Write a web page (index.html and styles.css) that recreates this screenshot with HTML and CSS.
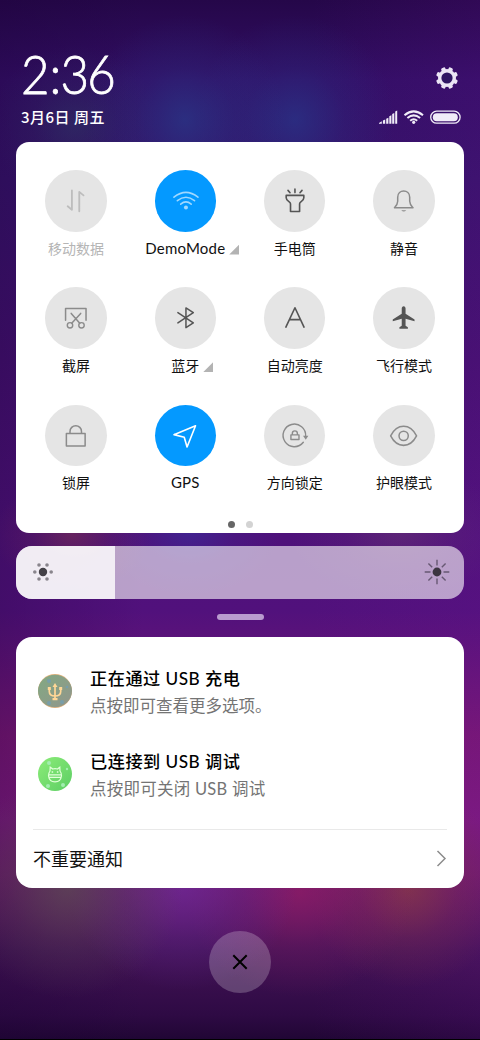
FILE: index.html
```html
<!DOCTYPE html>
<html lang="zh-CN">
<head>
<meta charset="utf-8">
<title>控制中心</title>
<link rel="stylesheet" href="styles.css">
</head>
<body>
<main class="screen">
  <header class="header">
    <div>
      <div class="clock">2<span class="colon">:</span>36</div>
      <div class="date">3月6日 周五</div>
    </div>
    <div class="status">
      <svg class="gear" viewBox="0 0 24 24"><g fill="#ebe5f5"><rect x="9.8" y="1" width="4.4" height="22" rx="1.3" transform="rotate(22.5 12 12)"/><rect x="9.8" y="1" width="4.4" height="22" rx="1.3" transform="rotate(67.5 12 12)"/><rect x="9.8" y="1" width="4.4" height="22" rx="1.3" transform="rotate(112.5 12 12)"/><rect x="9.8" y="1" width="4.4" height="22" rx="1.3" transform="rotate(157.5 12 12)"/><circle cx="12" cy="12" r="9"/></g><circle cx="12" cy="12" r="5.6" fill="#2f1663"/></svg>
      <svg class="indicators" viewBox="0 0 82 14">
        <path fill="#f0ecf8" d="M0 13L2.8 11.3V13.8H0zM3.9 10.6L6.2 9.6V13.8H3.9zM7.2 8.8L9.4 7.7V13.8H7.2zM10.3 6.3L12.4 5.2V13.8H10.3zM13.2 4L15.3 3V13.8H13.2zM16.2 1.6L18.2 .6V13.8H16.2z"/>
        <g fill="none" stroke="#f0ecf8" stroke-width="2"><path d="M25.5 5.2Q34.7-2.5 44 5.2M28.4 8Q34.7 2.8 41.1 8M31.2 10.7Q34.7 7.8 38.2 10.7"/></g><circle cx="34.7" cy="12.3" r="1.6" fill="#f0ecf8"/>
        <rect x="51.7" y="1.2" width="29.4" height="12" rx="6" fill="none" stroke="#f0ecf8" stroke-width="1.3"/><rect x="53.8" y="3.2" width="25" height="8" rx="4" fill="#f0ecf8"/>
      </svg>
    </div>
  </header>

  <section class="panel">
    <div class="tiles">
      <div class="tile muted"><div class="disc"><svg viewBox="0 0 61 61"><path d="M26.7 20.3V39.4L22.5 36M34 41V21.7L38.2 25.2" stroke="#bdbdbd" stroke-width="1.8"/></svg></div><div class="label">移动数据</div></div>
      <div class="tile on"><div class="disc"><svg viewBox="0 0 61 61"><path d="M18.8 27Q30.7 17.5 42.6 27M22.2 30.4Q30.7 23.7 39.2 30.4M25.5 33.9Q30.7 29.5 35.9 33.9" stroke="#a0d8ff" stroke-width="1.6"/><circle cx="30.7" cy="37.2" r="2" fill="#a0d8ff"/></svg></div><div class="label latin">DemoMode<i class="corner"></i></div></div>
      <div class="tile"><div class="disc"><svg viewBox="0 0 61 61"><path d="M22 25.2H39.5V27.5C39.5 31 35.3 31 35.3 33.5V41.2H26.3V33.5C26.3 31 22 31 22 27.5ZM30.7 19V22.4M23.8 20.2L25.8 22.5M37.7 20.2L35.7 22.5" stroke="#555" stroke-width="1.6"/></svg></div><div class="label">手电筒</div></div>
      <div class="tile"><div class="disc"><svg viewBox="0 0 61 61"><path d="M21.3 37.4H39.7C38 35.6 36.6 34.5 36.4 31V27C36.4 18.7 24.5 18.7 24.5 27V31C24.3 34.5 23 35.6 21.3 37.4Z" stroke="#8b8b8b" stroke-width="1.5"/><path d="M28 39.8H33Q30.5 42.5 28 39.8" fill="#8b8b8b"/></svg></div><div class="label">静音</div></div>
      <div class="tile"><div class="disc"><svg viewBox="0 0 61 61"><path d="M20.4 33V21.4H40.7V33M26 26.2L34.5 36M35.4 26.2L26.5 36" stroke="#8b8b8b" stroke-width="1.5"/><circle cx="24.8" cy="38" r="2.7" stroke="#8b8b8b" stroke-width="1.4"/><circle cx="36.2" cy="38" r="2.7" stroke="#8b8b8b" stroke-width="1.4"/></svg></div><div class="label">截屏</div></div>
      <div class="tile"><div class="disc"><svg viewBox="0 0 61 61"><path d="M22.7 25.4L38 35.6L30.7 40.3V20.8L38 25.4L22.7 35.6" stroke="#555" stroke-width="1.5"/></svg></div><div class="label">蓝牙<i class="corner"></i></div></div>
      <div class="tile"><div class="disc"><svg viewBox="0 0 61 61"><path d="M21.7 39.8L30.7 20.6L39.7 39.8M25.2 32.4H36.2" stroke="#555" stroke-width="1.6"/></svg></div><div class="label">自动亮度</div></div>
      <div class="tile"><div class="disc"><svg viewBox="0 0 61 61"><path fill="#555" d="M30.4 19C31.6 19 32.3 20 32.3 21.3V26.6L41.2 32.2V34L32.3 31.5V38.5L34.6 40V41.3H26.2V40L28.5 38.5V31.5L19.6 34V32.2L28.5 26.6V21.3C28.5 20 29.2 19 30.4 19Z"/></svg></div><div class="label">飞行模式</div></div>
      <div class="tile"><div class="disc"><svg viewBox="0 0 61 61"><path d="M21.2 28.2H39.8V40.6H21.2ZM24.8 28V26.2A5.7 5.7 0 0 1 36.2 26.2V28" stroke="#8b8b8b" stroke-width="1.5"/></svg></div><div class="label">锁屏</div></div>
      <div class="tile on"><div class="disc"><svg viewBox="0 0 61 61"><path d="M40.2 20.6L18.8 29.4L29 32L31.8 41.7Z" stroke="#fff" stroke-width="1.6"/></svg></div><div class="label latin">GPS</div></div>
      <div class="tile"><div class="disc"><svg viewBox="0 0 61 61"><path d="M39 37A11.2 11.2 0 1 1 41.3 31M26.7 29.6H34.7V34.2H26.7ZM28.1 29.4V28.2A2.5 2.5 0 0 1 33.1 28.2V29.4" stroke="#8b8b8b" stroke-width="1.4"/><path d="M38.7 30.4H44L41.4 34.4Z" fill="#8b8b8b"/></svg></div><div class="label">方向锁定</div></div>
      <div class="tile"><div class="disc"><svg viewBox="0 0 61 61"><path d="M17.5 30.6C24 18 36.7 18 43.2 30.6C36.7 43.2 24 43.2 17.5 30.6Z" stroke="#8b8b8b" stroke-width="1.5"/><circle cx="30.4" cy="30.6" r="4.6" stroke="#8b8b8b" stroke-width="1.5"/></svg></div><div class="label">护眼模式</div></div>
    </div>
    <div class="pages"><i></i><i></i></div>
  </section>

  <section class="slider">
    <div class="slider-fill"><svg width="22" height="22" viewBox="-11 -11 22 22"><circle r="4.2" fill="#444147"/><g fill="#89858c"><circle cx="-8.2" r="1.8"/><circle cx="8.2" r="1.8"/><circle cx="-4" cy="-7" r="1.8"/><circle cx="4" cy="-7" r="1.8"/><circle cx="-4" cy="7" r="1.8"/><circle cx="4" cy="7" r="1.8"/></g></svg></div>
    <svg width="26" height="26" viewBox="-13 -13 26 26"><circle r="4.4" fill="#3c3541"/><path d="M-12.3 0H-6.5M12.3 0H6.5M0-12.3V-6.5M0 12.3V6.5M-8.6-8.6L-4.8-4.8M8.6 8.6L4.8 4.8M-8.6 8.6L-4.8 4.8M8.6-8.6L4.8-4.8" stroke="#675873" stroke-width="1.4"/></svg>
  </section>
  <div class="handle"></div>

  <section class="notices">
    <article class="notice">
      <svg class="app" viewBox="0 0 34 34"><defs><linearGradient id="usb" x2="1" y2="1"><stop stop-color="#82a982"/><stop offset="1" stop-color="#92958c"/></linearGradient></defs><circle cx="17" cy="17" r="17" fill="#e8b47d"/><ellipse cx="17" cy="17" rx="17" ry="16.2" fill="url(#usb)"/><g fill="#789eaa"><circle cx="11" cy="7" r="2"/><circle cx="11" cy="29" r="2"/><circle cx="24" cy="28" r="2"/><circle cx="29" cy="13" r="1.3"/></g><path d="M17 11V25M11.3 14V17.5Q11.3 22 17 22Q22.7 22 22.7 17.5V14" fill="none" stroke="#ffd796" stroke-width="1.7"/><path d="M17 9L19.5 13H14.5ZM9.8 13H12.8V16H9.8ZM21.2 13H24.2V16H21.2ZM14.5 24H19.5V26.2H14.5Z" fill="#ffd796"/></svg>
      <div><div class="title">正在通过 USB 充电</div><div class="detail">点按即可查看更多选项。</div></div>
    </article>
    <article class="notice">
      <svg class="app" viewBox="0 0 34 34"><defs><linearGradient id="bug" x2="1" y2="1"><stop stop-color="#8cec78"/><stop offset="1" stop-color="#5cce64"/></linearGradient></defs><circle cx="17" cy="17" r="17" fill="url(#bug)"/><g fill="#a2edb0"><circle cx="11" cy="6" r="2"/><circle cx="10" cy="29" r="2"/><circle cx="25" cy="28" r="2"/><circle cx="29" cy="12" r="1.2"/></g><path d="M12 14L12.2 10.2L14.8 12Q17 11.3 19.5 12L21.8 10.2L22 14Q23.6 16 23.5 18.7Q22.8 24.8 17 24.8Q11.2 24.8 10.5 18.7Q10.5 16 12 14ZM10.8 17.8H23.3M11 20.4H23" fill="none" stroke="#e1ffd9" stroke-width="1.2"/><path d="M14.4 14.3V15.7M19.6 14.3V15.7" stroke="#e1ffd9" stroke-width="1.5"/></svg>
      <div><div class="title">已连接到 USB 调试</div><div class="detail wide">点按即可关闭 USB 调试</div></div>
    </article>
    <div class="more"><span>不重要通知</span><svg width="11" height="17" viewBox="0 0 11 17"><path d="M1.5 1L9 8.5L1.5 16" fill="none" stroke="#8c8c8c" stroke-width="1.5"/></svg></div>
  </section>
  <div class="close"><svg width="16" height="16" viewBox="0 0 16 16"><path d="M1.3 1.3L14.7 14.7M14.7 1.3L1.3 14.7" stroke="#000" stroke-width="2"/></svg></div>
</main>
</body>
</html>
```
FILE: styles.css
```css
* { box-sizing: border-box; }
body { margin: 0; font-family: Lato, "Noto Sans CJK SC", sans-serif; color: #111; }
.screen {
  width: 480px; height: 1040px; padding: 0 16px; overflow: hidden;
  display: flex; flex-direction: column;
  border-bottom: 1px solid #000;
  background:
    radial-gradient(ellipse 100px 105px at 185px 120px, rgba(38,66,145,.6), rgba(38,66,145,.2) 50%, transparent),
    radial-gradient(ellipse 100px 105px at 295px 120px, rgba(38,62,145,.6), rgba(38,62,145,.2) 50%, transparent),
    radial-gradient(ellipse 85px 80px at 75px 125px, rgba(45,60,100,.5), rgba(45,60,100,.17) 50%, transparent),
    radial-gradient(ellipse 80px 55px at 72px 535px, rgba(125,50,80,.55), rgba(125,50,80,.18) 50%, transparent),
    radial-gradient(ellipse 90px 65px at 190px 530px, rgba(58,45,155,.65), rgba(58,45,155,.2) 50%, transparent),
    radial-gradient(ellipse 110px 65px at 400px 532px, rgba(100,50,115,.6), rgba(100,50,115,.2) 50%, transparent),
    radial-gradient(ellipse 115px 110px at 68px 888px, rgba(92,75,84,.75), rgba(92,75,84,.3) 50%, transparent),
    radial-gradient(ellipse 115px 105px at 182px 885px, rgba(112,42,158,.7), rgba(100,42,158,.3) 50%, transparent),
    radial-gradient(ellipse 115px 105px at 300px 892px, rgba(146,28,102,.7), rgba(140,28,102,.26) 50%, transparent),
    radial-gradient(ellipse 100px 100px at 408px 888px, rgba(137,58,70,.75), rgba(137,54,70,.26) 50%, transparent),
    linear-gradient(90deg, rgba(25,0,50,.25), transparent 30%, transparent 65%, rgba(110,20,150,.16)),
    linear-gradient(#250749 0, #320e65 80px, #351269 180px, #42106e 360px, #4e117a 535px, #51117c 610px, #781774 735px, #7d1a7e 820px, #701a6d 875px, #441356 950px, #2e0a44 1015px, #200634 1040px);
}
.header { height: 142px; flex: none; display: flex; justify-content: space-between; padding: 0 3px 0 5px; color: #fff; }
.clock { margin-top: 45px; height: 58px; line-height: 58px; font-size: 54px; font-weight: 300; letter-spacing: -1.9px; -webkit-text-stroke: .8px #fff; transform: scaleX(.91); transform-origin: left; }
.colon { margin: 0 1px 0 2px; }
.date { margin-top: 3px; height: 22px; line-height: 22px; font-size: 15px; letter-spacing: .5px; font-weight: 500; white-space: nowrap; font-family: "Noto Sans CJK SC", sans-serif; }
.status { display: flex; flex-direction: column; align-items: flex-end; padding-top: 66px; }
.gear { width: 24px; height: 24px; margin-right: 2px; }
.indicators { width: 82px; height: 14px; margin-top: 20px; }
.panel { height: 391px; flex: none; border-radius: 13px; background: #fff; padding: 28px 5.2px 0; }
.tiles { display: grid; grid-template-columns: repeat(4, 1fr); grid-auto-rows: 117.4px; }
.tile { display: flex; flex-direction: column; align-items: center; }
.disc { width: 61.5px; height: 61.5px; border-radius: 50%; background: #e5e5e5; }
.disc svg { display: block; width: 100%; height: 100%; fill: none; stroke-linejoin: round; stroke-linecap: round; }
.on .disc { background: #0499ff; }
.label { position: relative; margin-top: 6px; line-height: 20px; font-size: 14px; white-space: nowrap; font-family: "Noto Sans CJK SC", sans-serif; }
.latin { font-family: Lato, sans-serif; font-size: 15px; letter-spacing: .2px; }
.muted .label { color: #b5b5b5; }
.corner { position: absolute; left: calc(100% + 4px); bottom: 3px; width: 10px; height: 10px; background: #b3b3b3; clip-path: polygon(100% 0, 100% 100%, 0 100%); }
.pages { display: flex; justify-content: center; gap: 11px; margin-top: -1.5px; }
.pages i { width: 7px; height: 7px; border-radius: 50%; background: #666; }
.pages i + i { background: #d3d3d3; }
.slider { height: 53.5px; flex: none; margin-top: 12.5px; border-radius: 16px; overflow: hidden; background: rgba(255,255,255,.6); display: flex; align-items: center; justify-content: space-between; padding-right: 14px; }
.slider-fill { width: 99px; height: 100%; background: rgba(255,255,255,.8); display: flex; align-items: center; padding-left: 16px; }
.handle { flex: none; align-self: center; width: 47px; height: 6px; margin: 15px 0 17px; border-radius: 3px; background: #b99bcf; }
.notices { flex: none; height: 251px; border-radius: 16px; background: #fff; padding: 28px 17px 0; }
.notice { height: 83px; display: flex; padding-left: 5px; gap: 18px; }
.app { width: 34px; height: 34px; margin-top: 9px; }
.title { line-height: 27px; font-size: 17.2px; letter-spacing: .5px; color: #000; font-weight: 500; font-family: Lato, "Noto Sans CJK SC", sans-serif; white-space: nowrap; }
.detail { line-height: 28px; font-size: 16.5px; color: #747474; white-space: nowrap; }
.wide { letter-spacing: .25px; }
.more { height: 57px; margin-top: -2px; border-top: 1px solid #e9e9e9; display: flex; align-items: center; justify-content: space-between; font-size: 18px; }
.close { flex: none; align-self: center; width: 62px; height: 62px; margin-top: 43px; border-radius: 50%; background: rgba(255,255,255,.22); display: grid; place-items: center; }
.close svg { display: block; }
```
